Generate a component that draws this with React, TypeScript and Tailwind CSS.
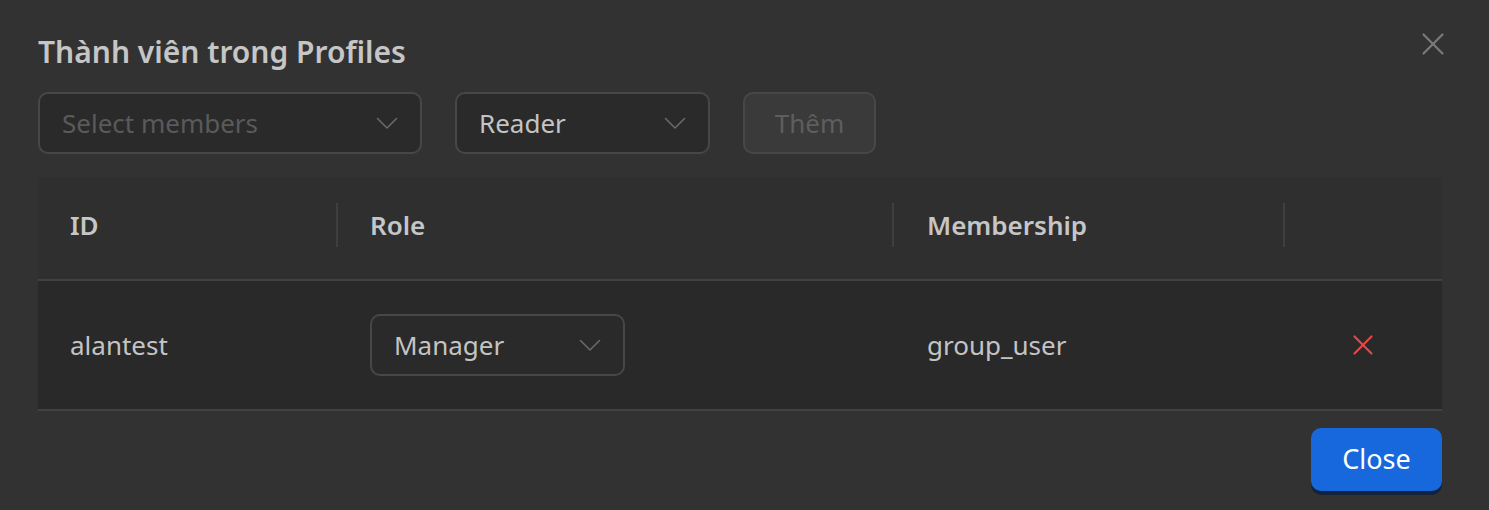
import { X } from 'lucide-react';

const font = { fontFamily: '"Noto Sans", "Open Sans", sans-serif' };

function Chevron() {
  return (
    <svg width="22" height="12" viewBox="0 0 22 12" fill="none" className="text-[#6a6a6a]">
      <path d="M1.5 1.5l9.5 9.5 9.5-9.5" stroke="currentColor" strokeWidth="1.5" strokeLinecap="round" strokeLinejoin="round" />
    </svg>
  );
}

function Select({ value, placeholder, width }: { value?: string; placeholder?: string; width: string }) {
  return (
    <div
      className={`${width} h-[62px] flex items-center justify-between rounded-[10px] border-2 border-[#474747] bg-[#2a2a2a] pl-[22px] pr-[22px]`}
    >
      {value ? (
        <span className="text-[26px] text-[#c4c4c4]">{value}</span>
      ) : (
        <span className="text-[26px] text-[#5a5a5a]">{placeholder}</span>
      )}
      <Chevron />
    </div>
  );
}

export default function App() {
  return (
    <div style={font} className="relative w-[1489px] h-[510px] overflow-hidden bg-[#323232] px-[38px] pt-[30px]">
      {/* close icon */}
      <button className="absolute top-[25px] right-[37px] text-[#7a7a7a]">
        <X className="w-[38px] h-[38px]" strokeWidth={1.4} />
      </button>

      <h2 className="text-[30px] font-semibold leading-[44px] text-[#c6c6c6]">Thành viên trong Profiles</h2>

      {/* controls */}
      <div className="mt-[18px] flex items-center gap-[33px]">
        <Select placeholder="Select members" width="w-[384px]" />
        <Select value="Reader" width="w-[255px]" />
        <button className="h-[62px] w-[133px] rounded-[10px] border-2 border-[#474747] bg-[#3a3a3a] text-[26px] text-[#5e5e5e]">
          Thêm
        </button>
      </div>

      {/* table */}
      <div className="mt-[23px] w-[1404px]">
        <div className="flex h-[104px] items-center border-b-2 border-[#424242] bg-[#2f2f2f] pb-[6px] text-[26px] font-semibold text-[#c6c6c6]">
          <div className="flex h-[44px] w-[300px] items-center border-r-2 border-[#3f3f3f] pl-[32px]">ID</div>
          <div className="flex h-[44px] w-[556px] items-center border-r-2 border-[#3f3f3f] pl-[32px]">Role</div>
          <div className="flex h-[44px] w-[391px] items-center border-r-2 border-[#3f3f3f] pl-[33px]">Membership</div>
          <div className="flex-1" />
        </div>
        <div className="flex h-[130px] items-center border-b-2 border-[#424242] bg-[#292929] text-[26px] text-[#c4c4c4]">
          <div className="w-[300px] pl-[32px]">alantest</div>
          <div className="w-[556px] pl-[32px]">
            <Select value="Manager" width="w-[255px]" />
          </div>
          <div className="w-[391px] pl-[33px]">group_user</div>
          <div className="flex flex-1 items-center pl-[61px]">
            <X className="w-[34px] h-[34px] text-[#e84749]" strokeWidth={1.5} />
          </div>
        </div>
      </div>

      {/* footer */}
      <div className="mt-[17px] flex w-[1404px] justify-end">
        <button className="h-[63px] w-[131px] rounded-[10px] bg-[#1668dc] text-[27px] text-white shadow-[0_4px_0_#14233d]">
          Close
        </button>
      </div>
    </div>
  );
}
